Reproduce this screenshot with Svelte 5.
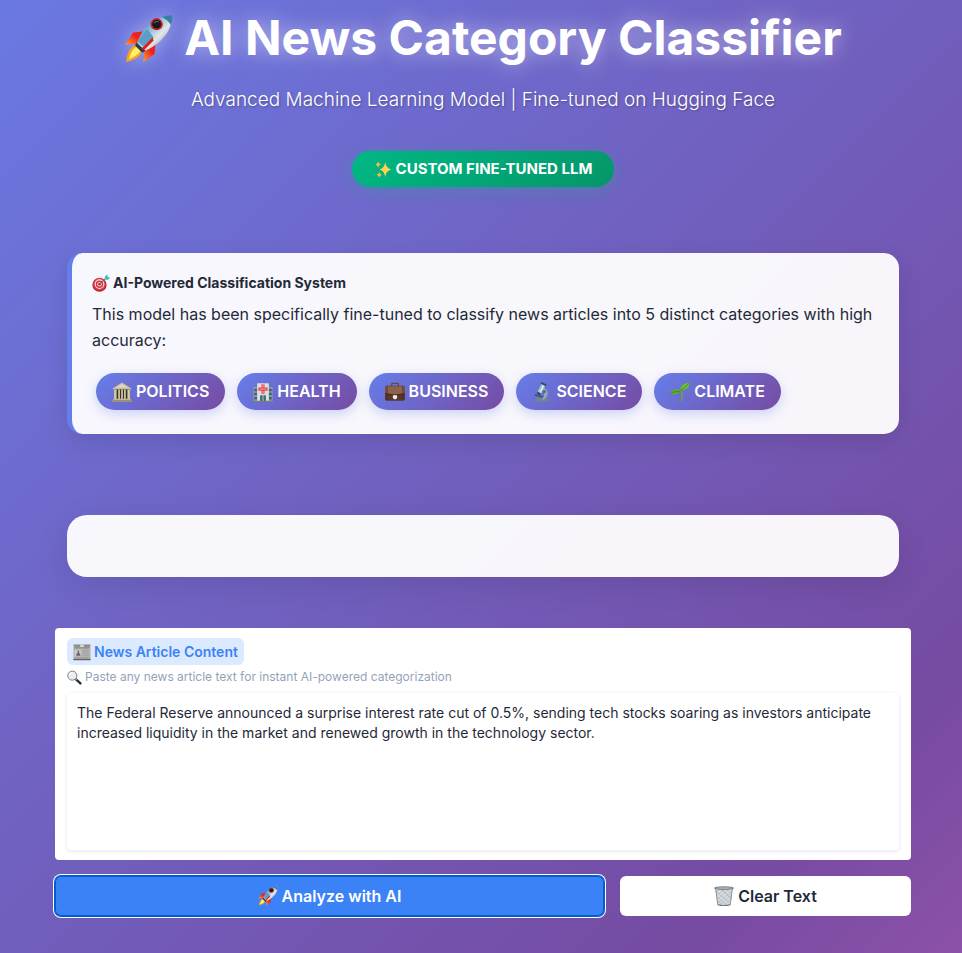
<script>
  const sample =
    'The Federal Reserve announced a surprise interest rate cut of 0.5%, sending tech stocks soaring as investors anticipate increased liquidity in the market and renewed growth in the technology sector.';
  let article = $state(sample);
  const categories = [
    { icon: 'politics', name: 'POLITICS' },
    { icon: 'health', name: 'HEALTH' },
    { icon: 'business', name: 'BUSINESS' },
    { icon: 'science', name: 'SCIENCE' },
    { icon: 'climate', name: 'CLIMATE' }
  ];
</script>

<svelte:head>
  <title>AI News Category Classifier</title>
</svelte:head>

{#snippet icon(name)}
  <svg class="icon" viewBox="0 0 48 48" aria-hidden="true">
    {#if name === 'rocket'}
      <defs>
        <linearGradient id="hull" x1="0" y1="0" x2="1" y2="1">
          <stop offset="0.1" stop-color="#2f6f9f" />
          <stop offset="0.4" stop-color="#8fc0dd" />
          <stop offset="0.6" stop-color="#e3e6e6" />
          <stop offset="1" stop-color="#777f85" />
        </linearGradient>
        <linearGradient id="fin" x1="1" y1="0" x2="0" y2="1">
          <stop offset="0.4" stop-color="#f0201c" />
          <stop offset="1" stop-color="#ffa030" />
        </linearGradient>
      </defs>
      <path d="M20 17L9 18L1 30L15 29Z" fill="url(#fin)" />
      <path d="M31 27L30 39L19 47L20 34Z" fill="url(#fin)" />
      <path d="M12 30C6 32 3 38 2 47C10 45 16 42 18 36Z" fill="#f6a51c" />
      <path d="M12 32C8 35 6 39 5 44C10 42 14 40 16 36Z" fill="#fff06a" />
      <path d="M13 29C16 16 28 3 47 1C48 17 34 31 20 36Z" fill="url(#hull)" />
      <path d="M37 3Q42 1 47 1Q48 6 46 11Q43 6 37 3Z" fill="#3b7ea8" />
      <path d="M14 27Q17 20 23 15L29 23L19 32Z" fill="#5b9cc8" />
      <path d="M12 28L21 36L18 38L11 31Z" fill="#2a3a46" />
      <path d="M28 23L17 34L20 35L29 26Z" fill="#e01b1b" />
      <circle cx="32" cy="10" r="6" fill="#c9222a" />
      <circle cx="32" cy="10" r="4.3" fill="#15171c" />
      <path d="M29.500 9Q31 6.500 34 7.500" fill="none" stroke="#5d6470" />
    {:else if name === 'sparkles'}
      <path d="M30 5Q32 21 46 25Q32 28 30 45Q27 28 15 25Q28 21 30 5Z" fill="#fbd34f" />
      <path d="M11 3Q12 10 18 12Q12 14 11 21Q10 14 4 12Q10 10 11 3Z" fill="#f5bd3d" />
      <path d="M14 31Q15 37 21 39Q15 41 14 47Q13 41 7 39Q13 37 14 31Z" fill="#f5bd3d" />
    {:else if name === 'target'}
      <ellipse cx="20" cy="29" rx="19" ry="18" fill="#b8212b" />
      <circle cx="20" cy="27" r="17" fill="#dd3440" />
      <circle cx="20" cy="27" r="13" fill="#f4e9e8" />
      <circle cx="20" cy="27" r="10" fill="#d52f3b" />
      <circle cx="20" cy="27" r="6" fill="#f4e9e8" />
      <circle cx="20" cy="27" r="3.500" fill="#c4202d" />
      <path d="M20 27L36 12" stroke="#555d66" stroke-width="2.500" />
      <path d="M33 15L35 6L41 1L42 8L48 9L43 15Z" fill="#43b9bd" />
    {:else if name === 'politics'}
      <path d="M2 15L24 1L46 15V18H2Z" fill="#c8bd99" />
      <path d="M8 14L24 4L40 14Z" fill="#e1d7b8" />
      <path d="M5 18H43V42H5Z" fill="#37332b" />
      <path d="M5 18H11V41H5ZM15 18H19V41H15ZM22 18H26V41H22ZM29 18H33V41H29ZM37 18H43V41H37Z" fill="#d6cba7" />
      <path d="M3 40H45V44H3Z" fill="#c2b793" />
      <path d="M0 44H48V48H0Z" fill="#9e9373" />
    {:else if name === 'health'}
      <path d="M1 12H14V46H1ZM34 12H47V46H34Z" fill="#8c9ca0" />
      <path d="M3 16H10V22H3ZM3 26H10V32H3ZM38 16H45V22H38ZM38 26H45V32H38ZM3 36H10V42H3ZM38 36H45V42H38Z" fill="#3f6673" />
      <path d="M10 3H38V46H10Z" fill="#dadfe1" />
      <path d="M20 6H28V13H35V21H28V28H20V21H13V13H20Z" fill="#e84753" />
      <path d="M20 10H28M17 17H31M20 24H28" stroke="#f9b4b8" stroke-width="2" />
      <path d="M17 32H31V46H17Z" fill="#426a77" />
      <path d="M24 32V46" stroke="#cbd6d8" stroke-width="2" />
      <path d="M0 45H48V48H0Z" fill="#747d7d" />
    {:else if name === 'business'}
      <path d="M16 11V5Q16 3 18 3H30Q32 3 32 5V11" fill="none" stroke="#66483c" stroke-width="3" />
      <rect y="9" width="48" height="36" rx="4" fill="#58372a" />
      <path d="M1 12Q1 10 4 10H44Q47 10 47 12V27Q24 34 1 27Z" fill="#8a634b" />
      <path d="M2 28Q24 35 46 28" fill="none" stroke="#33201a" stroke-width="2" />
      <path d="M5 10V43M43 10V43" stroke="#4b3027" stroke-width="2" />
      <path d="M19 32H29V39L24 42L19 39Z" fill="#f1ede5" />
    {:else if name === 'science'}
      <path d="M7 43Q8 38 17 38H35Q41 39 43 47H4Z" fill="#71858f" />
      <path d="M27 14Q42 20 36 35L29 42H24Q34 31 25 21Z" fill="#8faab6" />
      <path d="M8 29L27 34L25 38L6 33Z" fill="#405768" />
      <path d="M24 2L33 7L23 28L13 23Z" fill="#9bbbd0" />
      <path d="M27 4L31 6L21 26L18 24Z" fill="#dcebf1" />
      <path d="M23 0L35 6L33 10L21 4Z" fill="#344958" />
      <path d="M13 23L22 28L19 32L12 28Z" fill="#34495a" />
      <circle cx="29" cy="23" r="4" fill="#46697e" />
    {:else if name === 'climate'}
      <path d="M25 46C29 35 27 27 23 22L27 18Q34 31 29 46Z" fill="#68a928" />
      <path d="M25 23C22 14 12 15 1 27C3 33 17 30 25 23Z" fill="#5cae2b" />
      <path d="M25 20C25 7 34 3 47 2C47 13 39 20 25 20Z" fill="#69bd30" />
      <path d="M2 27Q14 21 25 23M25 20Q35 14 46 3" fill="none" stroke="#347e22" stroke-width="1.500" />
    {:else if name === 'news'}
      <path d="M1 3H47V44H1Z" fill="#b8b8b5" />
      <path d="M3 5H45V10H3Z" fill="#888" />
      <path d="M19 4H29V11H19Z" fill="#d5d5d2" />
      <path d="M4 13H44" stroke="#666" stroke-width="2" />
      <path d="M5 19H21V35H5Z" fill="#cacaca" />
      <path d="M8 34Q9 27 13 26Q10 20 14 20Q18 21 16 26Q20 28 20 34Z" fill="#666" />
      <path d="M25 19H43M25 24H43M25 29H43M25 34H43M5 39H43" stroke="#989895" stroke-width="2" />
      <path d="M1 42H47V46H1Z" fill="#646461" />
    {:else if name === 'search'}
      <path d="M28 29L43 43" stroke="#303338" stroke-width="8" stroke-linecap="round" />
      <path d="M26 27L31 32" stroke="#9ba1a6" stroke-width="5" />
      <circle cx="17" cy="18" r="14.500" fill="#e9eef0" stroke="#75797d" stroke-width="3" />
      <path d="M8 18Q9 9 18 8" fill="none" stroke="#fff" stroke-width="3" />
    {:else if name === 'trash'}
      <path d="M3 6H45L39 46Q24 50 9 46Z" fill="#d8dde0" />
      <path d="M5 15L17 6L42 28M6 23L28 6L41 18M8 32L38 6M9 41L43 12M13 46L42 22M22 47L41 31M31 47L7 26M40 43L5 13M22 47L8 35M13 6L42 32" fill="none" stroke="#a2aab0" stroke-width="1.300" />
      <path d="M4 7L9 45M44 7L39 45" stroke="#79848b" stroke-width="2" />
      <ellipse cx="24" cy="5" rx="23" ry="3" fill="#b9c0c4" stroke="#5e686f" stroke-width="2" />
      <path d="M9 44Q24 48 39 44V46Q24 50 9 46Z" fill="#65727b" />
    {/if}
  </svg>
{/snippet}

<main>
  <header>
    <h1>{@render icon('rocket')} AI News Category Classifier</h1>
    <p class="subtitle">Advanced Machine Learning Model | Fine-tuned on Hugging Face</p>
    <span class="badge">{@render icon('sparkles')} CUSTOM FINE-TUNED LLM</span>
  </header>

  <section class="about">
    <h2>{@render icon('target')} AI-Powered Classification System</h2>
    <p>
      This model has been specifically fine-tuned to classify news articles into 5 distinct
      categories with high accuracy:
    </p>
    <ul>
      {#each categories as category}
        <li>{@render icon(category.icon)} {category.name}</li>
      {/each}
    </ul>
  </section>

  <section class="panel"></section>

  <form onsubmit={(event) => event.preventDefault()}>
    <div class="field">
      <label for="article">{@render icon('news')} News Article Content</label>
      <p id="hint">{@render icon('search')} Paste any news article text for instant AI-powered categorization</p>
      <textarea id="article" aria-describedby="hint" bind:value={article}></textarea>
    </div>
    <div class="actions">
      <button class="primary" type="submit">{@render icon('rocket')} Analyze with AI</button>
      <button class="secondary" type="button" onclick={() => (article = '')}>{@render icon('trash')} Clear Text</button>
    </div>
  </form>
</main>

<style>
  :global(body) {
    min-height: 100vh;
    background: linear-gradient(135deg, #6a79e2 0%, #764ba2 85%, #8c51aa 100%);
  }

  main {
    box-sizing: border-box;
    padding: 8px 51px 36px 55px;
    font-family: Inter, 'Liberation Sans', sans-serif;
    color: #1f2937;
  }

  h1, h2, p, ul {
    margin: 0;
  }

  .icon {
    width: 20px;
    height: 20px;
    flex: none;
    overflow: visible;
  }

  header {
    display: flex;
    flex-direction: column;
    align-items: center;
    color: #fff;
    text-align: center;
  }

  h1 {
    display: flex;
    align-items: center;
    gap: 11px;
    font-size: 48px;
    line-height: 60px;
    font-weight: 700;
    text-shadow: 0 0 20px rgba(255, 255, 255, 0.5);
  }

  h1 .icon {
    width: 49px;
    height: 49px;
    filter: drop-shadow(0 0 10px rgba(255, 255, 255, 0.4));
  }

  .subtitle {
    margin-top: 16px;
    font-size: 19px;
    line-height: 32px;
    font-weight: 300;
    text-shadow: 1px 1px 2px rgba(0, 0, 0, 0.3);
  }

  .badge {
    display: flex;
    align-items: center;
    gap: 4px;
    margin-top: 35px;
    padding: 0 22px;
    border-radius: 25px;
    background: linear-gradient(135deg, #00b884, #059669);
    box-shadow: 0 4px 15px rgba(16, 185, 129, 0.3);
    font-size: 15px;
    line-height: 36px;
    font-weight: 700;
  }

  .badge .icon {
    width: 18px;
    height: 18px;
  }

  .about {
    margin: 66px 12px 0;
    padding: 20px 20px 24px;
    border-left: 5px solid #667eea;
    border-radius: 15px;
    background: rgba(255, 255, 255, 0.95);
    box-shadow: 0 8px 25px rgba(0, 0, 0, 0.1);
  }

  h2 {
    display: flex;
    align-items: center;
    gap: 3px;
    font-size: 14px;
    line-height: 20px;
    font-weight: 700;
  }

  h2 .icon {
    width: 18px;
    height: 18px;
  }

  .about p {
    margin-top: 8px;
    font-size: 16px;
    line-height: 26px;
  }

  ul {
    display: flex;
    flex-wrap: wrap;
    gap: 12px;
    margin-top: 20px;
    padding: 0 4px;
    list-style: none;
  }

  li {
    display: flex;
    align-items: center;
    gap: 4px;
    padding: 0 16px;
    border-radius: 20px;
    background: linear-gradient(135deg, #667eea, #764ba2);
    box-shadow: 0 4px 12px rgba(102, 126, 234, 0.3);
    color: #fff;
    font-size: 16px;
    line-height: 37px;
    font-weight: 600;
  }

  .panel {
    height: 62px;
    margin: 81px 12px 51px;
    border-radius: 20px;
    background: rgba(255, 255, 255, 0.95);
    box-shadow: 0 8px 32px rgba(0, 0, 0, 0.1);
  }

  form {
    display: flex;
    flex-direction: column;
    gap: 16px;
  }

  .field {
    display: flex;
    flex-direction: column;
    align-items: flex-start;
    padding: 10px 12px;
    border-radius: 4px;
    background: #fff;
  }

  label {
    display: flex;
    align-items: center;
    gap: 3px;
    padding: 4px 6px 3px;
    border-radius: 6px;
    background: #dbeafe;
    color: #3b82f6;
    font-size: 14px;
    line-height: 20px;
    font-weight: 600;
  }

  label .icon {
    width: 18px;
    height: 18px;
  }

  #hint {
    display: flex;
    align-items: center;
    gap: 3px;
    margin: 3px 0 7px;
    color: #94a3b8;
    font-size: 12px;
    line-height: 18px;
  }

  #hint .icon {
    width: 15px;
    height: 15px;
  }

  textarea {
    box-sizing: border-box;
    width: 100%;
    height: 157px;
    padding: 10px;
    border: 0;
    border-radius: 4px;
    outline: 0;
    background: #fff;
    box-shadow: 0 1px 4px rgba(0, 0, 0, 0.11);
    color: #1f2937;
    font: 14px/20px Inter, 'Liberation Sans', sans-serif;
    resize: none;
  }

  .actions {
    display: flex;
    gap: 16px;
  }

  button {
    display: flex;
    align-items: center;
    justify-content: center;
    gap: 4px;
    height: 40px;
    padding: 0;
    border: 0;
    border-radius: 6px;
    font: 600 16px/24px Inter, 'Liberation Sans', sans-serif;
    cursor: pointer;
  }

  .primary {
    flex: 549 1 0;
    background: #3b82f6;
    box-shadow: inset 0 0 0 1px #005fcc, 0 0 0 1px #005fcc, 0 0 0 2px #fff;
    color: #fff;
  }

  .secondary {
    flex: 291 1 0;
    background: #fff;
    color: #1f2937;
  }
</style>
